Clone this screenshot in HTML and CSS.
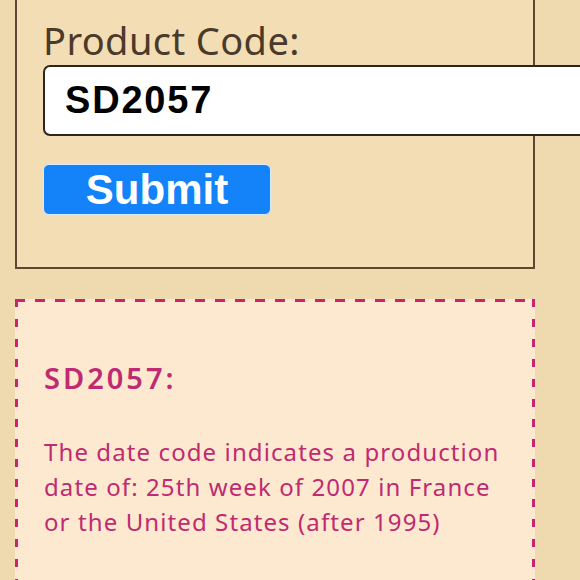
FILE: index.html
```html
<!DOCTYPE html>
<html lang="en">
<head>
<meta charset="utf-8">
<title>Date Code</title>
<link rel="stylesheet" href="styles.css">
</head>
<body>
<form class="panel">
  <label class="label" for="code">Product Code:</label>
  <input class="code-input" id="code" type="text" value="SD2057">
  <button class="submit" type="button">Submit</button>
</form>
<section class="result">
  <h2 class="result-title">SD2057:</h2>
  <p class="result-text">The date code indicates a production date of: 25th week of 2007 in France or the United States (after 1995)</p>
</section>
</body>
</html>
```
FILE: styles.css
```css
html, body {
  margin: 0;
  padding: 0;
  overflow: hidden;
  background: #efd9ae;
  width: 580px;
  height: 580px;
}
.panel {
  display: flex;
  flex-direction: column;
  align-items: flex-start;
  margin: -20px 45px 0 15px;
  padding: 36px 0 52px 26px;
  border: 2px solid #5c4832;
  border-top: none;
  background: #f2ddb5;
}
.label {
  font-family: "Noto Sans", sans-serif;
  font-size: 38px;
  letter-spacing: 0.4px;
  line-height: 48px;
  color: #4a3a2a;
}
.code-input {
  box-sizing: border-box;
  width: 600px;
  height: 71px;
  margin: 1px 0 0 0;
  padding: 0 0 0 20px;
  border: 2px solid #2e261e;
  border-radius: 7px;
  background: #fff;
  font-family: "Liberation Sans", Arial, sans-serif;
  font-weight: bold;
  font-size: 38px;
  letter-spacing: 1.8px;
  color: #000;
  outline: none;
}
.submit {
  box-sizing: border-box;
  width: 228px;
  height: 51px;
  margin-top: 28px;
  padding: 0;
  border: 1px solid #d8ecff;
  border-radius: 6px;
  background: #1483fa;
  color: #fff;
  font-family: "Liberation Sans", Arial, sans-serif;
  font-weight: bold;
  font-size: 42px;
  line-height: 49px;
}
.result {
  margin: 30px 45px 0 15px;
  padding: 61px 21px 60px 29px;
  background:
    linear-gradient(to right, #c8246f 50%, transparent 50%) left top / 20px 3px repeat-x,
    linear-gradient(to right, #c8246f 50%, transparent 50%) left bottom / 20px 3px repeat-x,
    linear-gradient(to bottom, #c8246f 40%, transparent 40%) left top / 3px 20px repeat-y,
    linear-gradient(to bottom, #c8246f 40%, transparent 40%) right top / 3px 20px repeat-y,
    #fde9d0;
  color: #c02a72;
  font-family: "Noto Sans", sans-serif;
}
.result-title {
  margin: 0;
  font-size: 29px;
  line-height: 36px;
  font-weight: 600;
  letter-spacing: 3px;
}
.result-text {
  margin: 38px 0 0 0;
  font-size: 24px;
  letter-spacing: 1.1px;
  line-height: 35px;
}
```
